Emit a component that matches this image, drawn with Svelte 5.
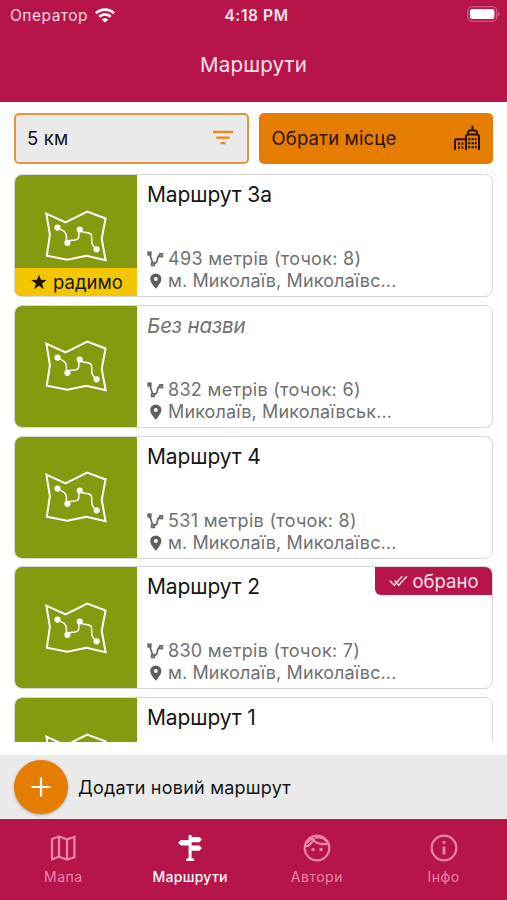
<script>
  const routes = [
    { id: 1, name: 'Маршрут 3а', length: 493, points: 8, place: 'м. Миколаїв, Миколаївс...', recommended: true },
    { id: 2, name: '', length: 832, points: 6, place: 'Миколаїв, Миколаївськ...' },
    { id: 3, name: 'Маршрут 4', length: 531, points: 8, place: 'м. Миколаїв, Миколаївс...' },
    { id: 4, name: 'Маршрут 2', length: 830, points: 7, place: 'м. Миколаїв, Миколаївс...' },
    { id: 5, name: 'Маршрут 1' }
  ];

  const tabs = [
    { id: 'map', label: 'Мапа' },
    { id: 'routes', label: 'Маршрути' },
    { id: 'authors', label: 'Автори' },
    { id: 'info', label: 'Інфо' }
  ];

  let activeTab = 'routes';
  let chosen = 4;
</script>

<div class="screen">
  <header>
    <div class="status">
      <span class="carrier">
        <span class="carrier-name">Оператор</span>
        <svg width="20" height="15" viewBox="0 0 20 15" fill="none" stroke="#fff" stroke-width="2.8">
          <path d="M1 5.2C6 .5 14 .5 19 5.2M4.3 8.7c3.3-3 8.1-3 11.4 0" />
          <path d="M6.8 11.4c1.8-1.7 4.6-1.7 6.4 0L10 14.6z" fill="#fff" stroke="none" />
        </svg>
      </span>
      <span class="clock">4:18 PM</span>
      <svg class="battery" width="33" height="16" viewBox="0 0 33 16">
        <rect x=".8" y=".8" width="29" height="14.4" rx="4.2" fill="none" stroke="#d76a90" stroke-width="1.1" />
        <rect x="2.9" y="2.9" width="24.6" height="10.2" rx="2.4" fill="#fff" />
        <path d="M31.3 5.6c1.6.6 1.6 4.2 0 4.8z" fill="#d76a90" />
      </svg>
    </div>
    <h1>Маршрути</h1>
  </header>

  <div class="toolbar">
    <button class="filter">
      <span>5 км</span>
      <svg width="22" height="16" viewBox="0 0 22 16" stroke="#e58a22" stroke-width="2.3">
        <path d="M1 2h20M4.3 7.6h13.4M8.5 13.2h5" />
      </svg>
    </button>
    <button class="place">
      <span>Обрати місце</span>
      <svg width="26" height="26" viewBox="0 0 26 26" fill="none" stroke="#281400" stroke-width="2">
        <path d="M1 25V15.2l1-1h9M12 25V11l1.5-1.4h10L25 11v14M14 9.6V7l1.5-1.5h6L23 7v2.6M18.5 5.5V.5" />
        <path d="M5 17.5V25M8.4 17.5V25M15.3 13v12M18.6 13v12M21.8 13v12" stroke-dasharray="2.2 1.8" />
      </svg>
    </button>
  </div>

  <main>
    {#each routes as route (route.id)}
      <article class="card">
        <div class="thumb">
          <svg width="62" height="52" viewBox="0 0 62 52" fill="none" stroke="#fff" stroke-width="2">
            <path d="M1.4 3.7L20.5 12.4 42.2 1.5 60.6 8.5 56.7 28.8 60.6 50.2 41.4 45.8 22.3 49.8 1.8 45.8 4.9 25z" />
            <path d="M12.5 17.8C15.5 20.5 20.8 19.5 21.4 26v6.2c1.7-3.6 10.5 0 12-4.2.8-2.5 0-7 1.5-8.2 3.2 4.5 9.8 1.2 11.4 5.2 1.5 4-2 9.7 5.4 14" stroke-width="1.5" />
            <g fill="#fff" stroke="none">
              <circle cx="12.5" cy="17.6" r="3.1" />
              <circle cx="22.4" cy="32.8" r="3.1" />
              <circle cx="34.7" cy="19.6" r="3.1" />
              <circle cx="51.6" cy="39.3" r="3.1" />
            </g>
          </svg>
          {#if route.recommended}
            <div class="recommended">
              <svg width="16" height="16" viewBox="0 0 16 16">
                <path d="M8 .5l1.9 5.3 5.7.1-4.5 3.5 1.6 5.5L8 11.7l-4.7 3.2 1.6-5.5L.4 5.9l5.7-.1z" fill="#191500" />
              </svg>
              <span>радимо</span>
            </div>
          {/if}
        </div>
        <div class="body">
          <h2 class:unnamed={!route.name}>{route.name || 'Без назви'}</h2>
          {#if route.length}
            <p>
              <svg width="17" height="16" viewBox="0 0 17 16" fill="none" stroke="#666" stroke-width="1.7">
                <path d="M3 4l2.5 7.5M7 12.5c5.5 0 1.5-8.2 6-8.2" />
                <rect x="1.2" y="1.2" width="2.6" height="2.6" />
                <rect x="4.6" y="11.8" width="2.6" height="2.6" />
                <rect x="12.8" y="2.9" width="2.6" height="2.6" />
              </svg>
              <span>{route.length} метрів (точок: {route.points})</span>
            </p>
          {/if}
          {#if route.place}
            <p class="address">
              <svg width="17" height="16" viewBox="0 0 17 16">
                <path d="M8.8.4a5.6 5.6 0 0 0-5.6 5.6c0 3.9 5.6 9.8 5.6 9.8s5.6-5.9 5.6-9.8A5.6 5.6 0 0 0 8.8.4zm0 3.6a2 2 0 1 1 0 4 2 2 0 0 1 0-4z" fill="#5e5e5e" />
              </svg>
              <span>{route.place}</span>
            </p>
          {/if}
        </div>
        {#if route.id === chosen}
          <div class="chosen">
            <svg width="19" height="12" viewBox="0 0 19 12" fill="none" stroke="#ffe0ea" stroke-width="1.5">
              <path d="M.8 5.8l4.4 4.4 8-9M5.6 5.6l1.8 1.9M8.2 8.6l1.6 1.6 8-9" />
            </svg>
            <span>обрано</span>
          </div>
        {/if}
      </article>
    {/each}
  </main>

  <div class="add">
    <button aria-label="Додати">
      <svg width="20" height="20" viewBox="0 0 20 20" stroke="#fff" stroke-width="2.2">
        <path d="M10 .5v19M.5 10h19" />
      </svg>
    </button>
    <span>Додати новий маршрут</span>
  </div>

  <nav>
    {#each tabs as tab}
      <button class:active={tab.id === activeTab} on:click={() => (activeTab = tab.id)}>
        <svg width="28" height="28" viewBox="0 0 28 28" fill="none" stroke="currentColor" stroke-width="2.2">
          {#if tab.id === 'map'}
            <path d="M3 5l7-2.5 8 2.8 7.4-2.4v20.3L18 25.5l-8-2.8L3 25.3zM10 2.5v20.2M18 5.3v20.2" />
          {:else if tab.id === 'routes'}
            <g fill="currentColor" stroke="none">
              <path d="M12.6 1h3v23.6h2.6V27h-8v-2.4h2.4z" />
              <path d="M14 3h9.5l2.4 2.6-2.4 2.6H14zM14 6H5L2 8.8l3 2.8h9zM14 11.5h9.5l2.4 2.6-2.4 2.6H14z" />
            </g>
          {:else if tab.id === 'authors'}
            <circle cx="14" cy="14" r="12.3" />
            <path d="M2 12.5C7 12 9.5 8.3 11.3 4.2M8.8 3.2c1.5 5 8 8.2 16.7 6.5M3.5 9.5C5 7 7.2 5 10 4.2M12 3.8c5-1.1 9.4.2 12 4.1" />
            <g fill="currentColor" stroke="none">
              <circle cx="10" cy="15.5" r="1.7" />
              <circle cx="18" cy="15.5" r="1.7" />
            </g>
          {:else}
            <circle cx="14" cy="14" r="12.3" />
            <path d="M14 12.5v8M14 7v2.8" stroke-width="2.8" />
          {/if}
        </svg>
        <span>{tab.label}</span>
      </button>
    {/each}
  </nav>
</div>

<style>
  :global(body) {
    margin: 0;
    background: #fff;
    font-family: Inter, "Liberation Sans", sans-serif;
  }

  .screen {
    display: flex;
    flex-direction: column;
    height: 900px;
    overflow: hidden;
    color: #161616;
  }

  svg {
    display: block;
    flex: none;
  }

  button {
    border: 0;
    padding: 0;
    font: inherit;
    color: inherit;
  }

  header {
    flex: none;
    height: 101.5px;
    background: #b7144a;
    color: #fff;
  }

  .status {
    display: grid;
    grid-template-columns: 1fr auto 1fr;
    align-items: center;
    height: 30px;
    padding: 0 7px 0 10px;
    font-size: 15.5px;
  }

  .carrier {
    display: flex;
    align-items: center;
    gap: 7px;
    color: #ffd9e5;
  }

  .carrier-name {
    letter-spacing: 0.5px;
  }

  .clock {
    margin-right: -3px;
    font-weight: 600;
    letter-spacing: 0.6px;
    color: #ffe5ee;
  }

  .battery {
    justify-self: end;
    margin-top: -2px;
  }

  h1 {
    margin: 21px 0 0;
    font-size: 20.5px;
    font-weight: 400;
    line-height: 28px;
    letter-spacing: 0.2px;
    text-align: center;
    color: #ffe0ea;
  }

  .toolbar {
    display: grid;
    grid-template-columns: 1fr 1fr;
    gap: 10px;
    padding: 11px 14px 0;
  }

  .toolbar button {
    display: flex;
    justify-content: space-between;
    align-items: center;
    box-sizing: border-box;
    height: 51px;
    border: 2px solid #e6943c;
    border-radius: 5px;
    padding: 0 13px 0 11px;
    background: #eaeaea;
    font-size: 18.5px;
    letter-spacing: 0.15px;
  }

  .toolbar .place {
    border-color: #e57e00;
    padding-right: 11px;
    background: #e57e00;
    color: #281400;
  }

  main {
    flex: none;
    display: flex;
    flex-direction: column;
    gap: 7.75px;
    height: 567.5px;
    margin: 10.5px 14px 13.5px;
    overflow: hidden;
  }

  .card {
    position: relative;
    flex: none;
    display: flex;
    box-sizing: border-box;
    height: 123px;
    border: 1px solid #d8d8d8;
    border-radius: 8px;
    overflow: hidden;
  }

  .thumb {
    position: relative;
    flex: none;
    display: flex;
    justify-content: center;
    align-items: center;
    width: 122px;
    background: #859a0e;
  }

  .recommended {
    position: absolute;
    left: 0;
    right: 0;
    bottom: 0;
    display: flex;
    justify-content: center;
    align-items: center;
    gap: 6px;
    height: 28px;
    padding-left: 2px;
    background: #f3c600;
    font-size: 18.5px;
  }

  .body {
    flex: 1;
    display: flex;
    flex-direction: column;
    padding: 6px 10px 4px;
  }

  h2 {
    margin: 0 0 auto;
    font-size: 21px;
    font-weight: 400;
    line-height: 27px;
    letter-spacing: -0.1px;
  }

  .unnamed {
    font-size: 20.5px;
    font-style: italic;
    color: #707070;
  }

  .body p {
    display: flex;
    align-items: center;
    gap: 4px;
    margin: 0;
    font-size: 18px;
    line-height: 22px;
    letter-spacing: 0.3px;
    white-space: nowrap;
    color: #707070;
  }

  .body .address {
    letter-spacing: 0.12px;
  }

  .chosen {
    position: absolute;
    top: 0;
    right: 0;
    display: flex;
    justify-content: center;
    align-items: center;
    gap: 5px;
    width: 117px;
    height: 28px;
    border-bottom-left-radius: 6px;
    background: #b7144a;
    color: #ffe0ea;
    font-size: 18.5px;
  }

  .add {
    flex: none;
    display: flex;
    align-items: center;
    gap: 10px;
    height: 64px;
    padding-left: 14px;
    background: #eaeaea;
    font-size: 18px;
    letter-spacing: 0.22px;
  }

  .add button {
    display: flex;
    justify-content: center;
    align-items: center;
    width: 54px;
    height: 54px;
    border-radius: 50%;
    background: #e57e00;
    box-shadow: 0 1px 3px rgba(0, 0, 0, 0.3);
  }

  nav {
    flex: 1;
    display: grid;
    grid-template-columns: repeat(4, 1fr);
    background: #b7144a;
  }

  nav button {
    display: flex;
    flex-direction: column;
    align-items: center;
    gap: 6px;
    padding-top: 15px;
    background: none;
    color: #ea86aa;
    font-size: 14px;
    line-height: 18px;
    letter-spacing: 0.5px;
  }

  nav .active {
    color: #fff;
    font-weight: 500;
    letter-spacing: 0.3px;
  }
</style>
